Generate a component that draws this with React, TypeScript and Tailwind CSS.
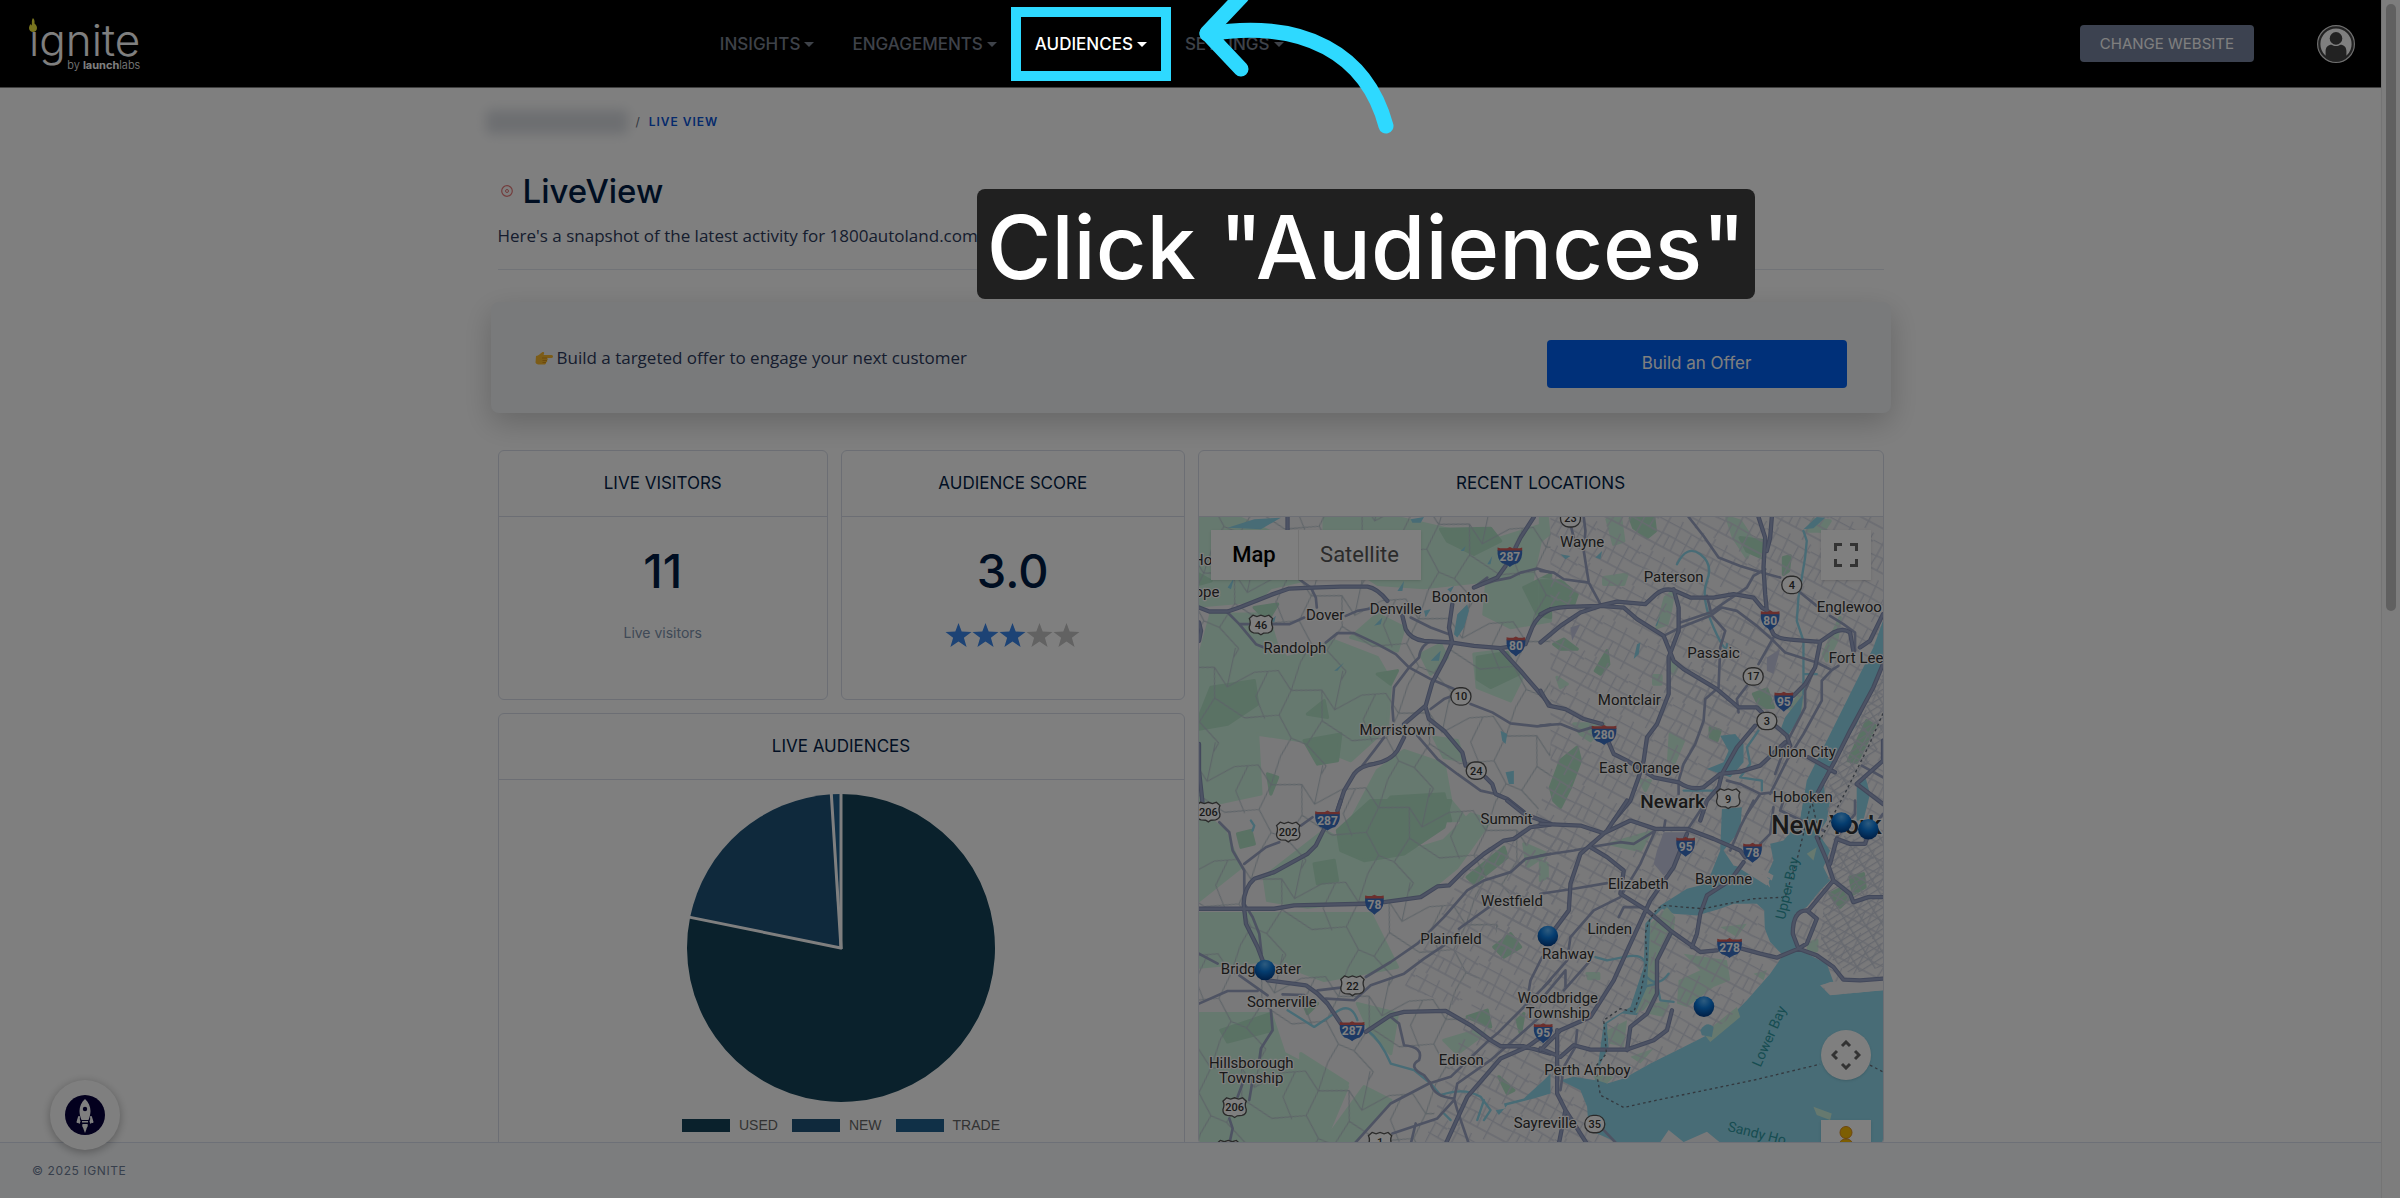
import { ReactNode } from 'react';

const navLinks = ['INSIGHTS', 'ENGAGEMENTS', 'AUDIENCES', 'SETTINGS'];

const Caret = () => (
  <svg viewBox="0 0 10 5" className="h-[5px] w-[10px] shrink-0" fill="currentColor" aria-hidden="true">
    <path d="M0 0h10L5 5z" />
  </svg>
);

const Logo = () => (
  <a href="#" aria-label="ignite by launchlabs" className="relative flex flex-col items-end text-white">
    <svg viewBox="0 0 16 28" className="absolute left-0 top-[2px] h-[14px] w-[8px]" fill="#f0e83c" aria-hidden="true">
      <path d="M8 0C12 4 11 8 11 11c2 1 5 5 5 9 0 5-4 8-8 8s-8-3-8-8c0-3 2-6 3-8 1 1 1 2 2 3C7 11 4 5 8 0z" />
    </svg>
    <span className="text-[44px] font-light leading-[48px]">ıgnite</span>
    <span className="-mt-1.5 text-[11px] font-light leading-[14px]">
      by <b className="font-bold">launch</b>labs
    </span>
  </a>
);

const Arrow = () => (
  <svg viewBox="1190 0 210 140" className="pointer-events-none absolute -top-[7px] left-[154px] z-30 h-[140px] w-[210px]" fill="none" stroke="#2ed9ff" strokeWidth="15" strokeLinecap="round" strokeLinejoin="round" aria-hidden="true">
    <path d="M1387 126C1368 55 1306 18 1208 34" />
    <path d="M1243 -4L1208 33L1242 69" />
  </svg>
);

const Avatar = () => (
  <svg viewBox="0 0 38 38" className="size-[38px]" aria-hidden="true">
    <circle cx="19" cy="19" r="18.4" fill="#444" stroke="#ddd" strokeWidth="1.2" />
    <circle cx="19" cy="19" r="15.6" fill="#fff" />
    <circle cx="19" cy="13.4" r="6.3" fill="#444" />
    <path d="M8.6 32V26c0-4 2.500-6.300 6-6.300 1.300.9 2.700 1.300 4.400 1.300s3.100-.4 4.400-1.300c3.500 0 6 2.300 6 6.300v6c-3 3.400-6.500 4.800-10.400 4.800S11.600 35.400 8.600 32z" fill="#444" />
  </svg>
);

const Header = () => (
  <header className="relative z-20 flex h-[88px] shrink-0 items-center border-b border-[#808080] bg-black pl-[29px] pr-[26px]">
    <div className="flex w-[29.7%] shrink-0">
      <Logo />
    </div>
    <nav>
      <ul className="flex gap-[38px] text-[17px] font-medium">
        {navLinks.map((link) =>
          link === 'AUDIENCES' ? (
            <li key={link} className="relative flex h-[74px] items-center pt-0.5">
              <span className="pointer-events-none absolute -inset-x-6 inset-y-0 z-10 border-10 border-[#2ed9ff] shadow-[0_0_0_9999px_rgba(0,0,0,0.5)]" />
              <button type="button" className="flex items-center gap-1 text-white">
                {link}
                <Caret />
              </button>
              <Arrow />
              <div role="tooltip" className="absolute -left-[58px] top-[182px] z-30 rounded-lg bg-[#202020] px-2.5 pt-1.5 text-[88px] leading-[104px] whitespace-nowrap text-white">
                Click "Audiences"
              </div>
            </li>
          ) : (
            <li key={link} className="flex h-[74px] items-center pt-0.5">
              <button type="button" className="flex items-center gap-1 text-[#7d8492]">
                {link}
                <Caret />
              </button>
            </li>
          )
        )}
      </ul>
    </nav>
    <div className="ml-auto flex items-center gap-[63px]">
      <button type="button" className="rounded bg-[#7885a0] px-5 text-[15px] leading-[37px] text-white">
        CHANGE WEBSITE
      </button>
      <button type="button" aria-label="Account">
        <Avatar />
      </button>
    </div>
  </header>
);

const Card = ({ title, className = '', children }: { title: string; className?: string; children: ReactNode }) => (
  <section className={`overflow-hidden rounded-md border border-[#d8dde8] ${className}`}>
    <h2 className="border-b border-[#d8dde8] text-center text-[17px] leading-[65px] text-[#041f48]">{title}</h2>
    {children}
  </section>
);

const Stars = ({ score }: { score: number }) => (
  <div className="mt-6 flex h-6 justify-center" role="img" aria-label={`${score} of 5`}>
    {[1, 2, 3, 4, 5].map((n) => (
      <svg key={n} viewBox="0 0 27 24" className="h-6 w-[27px]" fill={n <= score ? '#3a86ea' : '#c4c4c4'}>
        <path d="M13.500 0l3.200 8.600 9.800.3-7.600 5.800 2.700 9.300-8.100-5.400L5.400 24l2.700-9.300L.5 8.900l9.800-.3z" />
      </svg>
    ))}
  </div>
);

const audiences = [
  { name: 'USED', color: '#144258', from: 0, to: 281.5 },
  { name: 'NEW', color: '#1e5278', from: 281.5, to: 356.4 },
  { name: 'TRADE', color: '#20608e', from: 356.4, to: 360 },
];

const slicePath = (from: number, to: number) => {
  const point = (deg: number) => {
    const a = ((deg - 90) * Math.PI) / 180;
    return `${155 + 154 * Math.cos(a)} ${155 + 154 * Math.sin(a)}`;
  };
  return `M155 155L${point(from)}A154 154 0 ${to - from > 180 ? 1 : 0} 1 ${point(to)}Z`;
};

const AudiencePie = () => (
  <div className="flex flex-col items-center pt-[13px] pb-16">
    <svg viewBox="0 0 310 310" className="size-[310px]">
      {audiences.map((a) => (
        <path key={a.name} d={slicePath(a.from, a.to)} fill={a.color} />
      ))}
      {audiences.map((a) => (
        <path key={a.name} d="M155 156V0" stroke="#fff" strokeWidth="3" transform={`rotate(${a.from} 155 155)`} />
      ))}
    </svg>
    <ul className="mt-3 flex gap-[14px] font-['Liberation_Sans',sans-serif] text-[14px] leading-5 text-[#666]">
      {audiences.map((a) => (
        <li key={a.name} className="flex items-center gap-[9px]">
          <span className="h-[13px] w-12" style={{ backgroundColor: a.color }} />
          {a.name}
        </li>
      ))}
    </ul>
  </div>
);

/*
 * The map is drawn on a grid of 3 units per pixel. East and South
 * shift a tile to its half of the map.
 */
const EAST = 'translate(1050 0)';
const SOUTH = 'translate(0 1080)';
const SOUTH_EAST = 'translate(1050 1080)';
const tiles = ['', EAST, SOUTH, SOUTH_EAST];

const parks = [
  'M24 228H140L300 300 330 420 240 440 200 480 24 495ZM400 230H620L760 262 900 290 890 420 700 440 560 430 500 390 400 300ZM60 520H230L260 620 330 700 240 760 24 800V650ZM24 720L330 640 430 600 560 650 600 720 590 860 480 960 330 900 200 880 210 1060 24 1100ZM480 590L560 520 640 560 620 630ZM690 640L750 610 770 650 720 700ZM560 990L640 930 760 970 780 1080 830 1140H480ZM900 300L1060 250 1020 440 1080 400V540L960 560 880 520ZM850 640L930 630 1000 700 960 780 860 740ZM730 890L800 900 820 960 760 950Z',
  'M0 228H20L25 280 0 300ZM200 235L240 228 250 300 220 310ZM560 228L600 240 640 300 620 350 580 290ZM0 415L70 425 100 480 0 500ZM820 235L870 240 850 270 800 270ZM190 410L260 400 250 430 190 430ZM350 560L375 470 400 450 390 510 380 550ZM850 640L900 530 890 600 860 660ZM760 790L790 740 780 820 740 800ZM390 660L410 680 400 700 385 690ZM340 705H362V730H340ZM50 710L80 730 60 740ZM390 880L430 900 400 970 385 960ZM100 850L190 850 150 900 120 880ZM300 1020H330L315 1050Z',
  'M24 30L100 90 150 200 24 300ZM24 340H540L620 500 400 540 240 480 24 500ZM220 230L400 90 560 180 760 120 840 40 900 60 800 200 690 290 540 300 350 320 230 300ZM24 640H240L280 760 470 860 400 1026H24ZM330 760L470 850 430 900 330 860ZM500 610L620 640 600 760 540 700ZM520 860L600 900 490 1026H400ZM760 720L860 690 880 700 800 760ZM24 340H200L120 480 24 490ZM1000 130L1070 160 1010 200Z',
  'M330 370L380 320 405 350 400 400 350 480V580L310 630 285 640 320 560ZM430 460L560 480 570 540 520 560 440 620 410 610 415 540 480 510ZM200 690L260 660 250 740 205 730ZM490 700L590 620 600 650 510 725ZM805 430L830 420V450L805 460ZM640 520L680 510 670 540ZM210 130L330 95 300 150ZM0 180L20 190V230L0 240ZM160 820L220 830 200 850 170 840ZM540 380L620 370 590 410ZM340 610L390 600 370 650 320 640ZM270 770L340 745 300 790ZM820 920L875 940 870 960 830 945ZM140 520H175V535H145ZM800 160L830 140 820 180Z',
];

const forests = [
  'M24 830L60 740 190 720 200 790 110 850 24 865ZM860 650L950 635 985 700 900 740 860 715ZM1000 440L1080 400V530L1040 520ZM750 265L900 262 930 300 850 340 770 300ZM340 900L450 880 440 960 380 970ZM540 1140L600 1070 760 1060 780 1140ZM350 820L400 780 410 830ZM190 500L260 490 230 540ZM24 400L60 420 24 430ZM560 700L620 690 600 730ZM230 1000L260 1010 240 1060Z',
  'M0 420L60 420 110 460 100 490 0 510ZM270 232L340 228 345 270 320 290 280 260ZM600 290L675 300 665 350 620 330ZM40 1080L30 1040 60 960 110 920 120 960 90 1040 60 1100ZM165 690L200 630 205 670 180 700ZM40 610L70 595 110 625 60 625ZM510 860L540 870 530 900 510 890ZM925 960L980 840 1005 855 950 965ZM640 760L680 745 700 800 660 800ZM730 350L750 345 745 390 730 400Z',
  'M440 90L540 0H780L760 80 640 160 520 180 450 150ZM90 690L240 640 245 690 110 725ZM910 440L960 400 990 440 940 470ZM830 230L940 140 950 170 850 250ZM830 650L890 630 900 680ZM140 100L180 90 190 130 150 140ZM370 190L430 180 440 240 380 250ZM925 830L970 870 950 880ZM980 660L1000 640 990 700ZM330 590L380 610 350 640Z',
  'M870 280L910 260 930 290 900 320ZM930 230L970 220 975 260 940 280ZM230 690L255 670 250 730Z',
];

const lakes = [
  'M110 260L190 235 270 230 210 265 150 262ZM790 580L800 520 830 490 835 510 820 560 800 590ZM660 235L700 228 690 245 665 245ZM720 660L750 630 745 660ZM430 690L460 665 440 690ZM930 870L950 880 945 910 935 900ZM945 995L970 990 970 1030 955 1030ZM620 450L640 420 635 450ZM550 555L575 530 570 550ZM700 510L720 505 705 530ZM890 370L905 345 900 370ZM810 330L825 315 820 330ZM240 540L255 525 250 545ZM110 440L130 410 120 445ZM770 445L790 435 780 455Z',
  'M790 265L830 228 855 230 820 262ZM60 340L90 345 75 355ZM165 350L185 330 180 355ZM280 655L290 610 300 605 295 640ZM540 885L585 880 610 910V965L570 1010 500 985 550 965 565 930ZM735 830L790 760 780 830 740 890 720 870ZM1029 540L1000 620 960 700 860 900 830 960 800 1020 780 1140H860L850 1010 900 930 950 850 1000 740 1029 670ZM950 1040L975 1005 990 1060 970 1140H950ZM345 555L360 525 350 555Z',
  'M915 930L945 925 940 910 1000 895 1060 840 1080 820V880L1030 895 950 915 925 945Z',
  // Newark Bay, the kills, the harbour and the lower bay
  'M545 25L605 20 600 90 550 150 580 195 640 210 690 262 680 225 700 180 690 130 730 120 780 60 790 0H870L860 60 835 100 870 150 850 200 870 240 840 270 800 320 765 340 755 400 780 450 860 490 880 545 840 555 870 585 1029 570V1032H545L500 995 430 1026 385 990 360 1026H230L145 990 140 920 120 870 60 840 100 830 165 840 175 780 190 670 270 620 310 500 315 370 360 315 440 265 500 250 540 150Z',
];

const statenIsland =
  'M330 360L365 325 400 340 470 345 540 325 580 310 650 310 672 330 674 385 690 425 728 465 690 520 620 600 560 660 500 705 430 740 330 790 250 835 200 850 165 825 185 780 205 740 200 670 245 640 290 645 325 560 332 470Z';

const creeks = [
  '',
  'M410 370Q440 310 480 340T500 420 520 560 560 610M790 270L800 300 795 350 775 470 770 540 790 600V700L830 700M655 870L620 920 630 970 600 1010 665 1020V1050M520 1050H430M790 690V760',
  'M530 690Q570 720 600 790L670 810 720 850 750 885Q820 860 870 890L900 930 880 960M290 630L370 680 430 640Q480 600 500 660M180 60L190 75 185 90M760 940L780 960M860 960L880 900',
  'M165 470L200 480 250 470Q300 460 310 480M310 560L350 550 360 600 400 605M310 520Q350 570 385 520',
];

const highways = [
  // I-80, I-287 and NJ 24
  'M24 500L55 512H110L145 500 240 462 295 443 365 440 450 437H530Q560 442 590 480M635 525L645 565Q660 595 700 600L780 605 850 615 930 622 1005 610 1025 560Q1040 525 1080 505M930 625L990 690 1020 725 1055 765 1080 795M290 228V290M1030 228L990 290 975 320M945 375L920 410 850 440M785 490L775 560 785 605 760 660 725 725 705 795 640 850M640 890L620 930Q600 960 550 970 510 975 490 1000L460 1050 440 1110M705 800L715 835 760 870 815 935 825 975M885 1010L905 1030 915 1060 950 1075 1000 1115M24 910V990L35 1090M24 545L30 570 24 600',
  'M0 520Q30 500 80 498L175 495 230 482 315 490 345 462Q370 440 400 448L450 470H520L580 460 640 470 665 500 690 515M690 560L700 580Q715 595 760 597L840 603 880 575Q910 560 930 575L940 630M0 750L25 795 75 805 130 835 185 850M205 905L220 940 260 960 340 1010 415 1025Q450 1050 490 1040L540 1000 600 993 660 975 735 905M0 605L60 555 120 515 180 495 250 500 290 535 370 585 400 660 430 685 530 745 595 800H650L665 815M655 228L675 290 670 380 675 460 680 510M695 228L690 290 680 330M400 445L415 500V570L385 650V760L350 850 320 890 310 960 295 1010 270 1080 220 1140M760 765L795 730 825 680 840 605M645 855L590 920 545 1000 535 1040 500 1080 480 1140M700 850L740 885 750 915M1029 520L990 600 960 620M1029 670L1000 740 930 870 885 960 820 1080M805 950L885 995M1029 900V960L950 1030 1029 1090',
  'M24 325H250L310 315 525 310M580 305L690 290 740 258 775 255 820 210 880 160 940 120 970 115 1020 80 1080 72M450 0L440 30M400 85L375 135 350 160 250 215 190 235Q160 260 158 310L165 370 200 440 215 480M230 540L345 555 380 580 410 610 450 670M525 695L600 645 640 635 765 632 840 675 900 720 930 738H1000L1080 760M765 1032L830 890 930 775 1010 740 1080 690M950 0L1000 40 1080 70',
  'M0 70L120 75 190 98 270 60 345 85H440L520 115 600 150 615 170M260 0L200 90 120 160 90 250 85 330 40 390M440 100L400 200 330 300 270 430 220 540 150 650 60 690 0 750M150 140L200 170 250 210 240 280 320 330 390 390 460 440 480 455 530 450M605 445L660 460 710 472 775 445 830 465 880 500 910 538 960 540 1029 535M610 185L570 240 500 285 480 340 470 400 455 440M390 400L350 480V580L320 640 270 680 260 750M395 630L380 690 340 720 260 748H150L100 735 60 770 0 745M50 690V880L75 930 140 1032M75 930L55 1032M775 445L758 400Q758 330 800 330L830 355 800 430ZM805 330L880 240 860 180 830 110M880 240L930 280 940 305 985 290H1029M870 190L890 115 930 130H975L985 100',
];

const routes = [
  'M110 515L145 550H180M245 550H295L340 530M465 525L500 510 540 503M660 530L720 560 775 580M145 550L195 610 225 622M325 415L360 440 375 470 378 500M405 605L440 577H490L560 610 615 640 655 680 720 715 790 745M840 790L905 815 960 848 1040 857 1080 852M725 600Q690 610 685 650L655 680 610 740 605 800 608 840M580 890L550 930 515 975M680 885L740 955 800 1000 870 1050 915 1060M1080 395L1040 383 990 395 960 410 910 420 850 440 890 410M720 805L760 775 800 760',
  'M130 228L135 270 130 330 145 425 180 490M0 390L40 395 70 415 145 425M445 228L490 285 535 350 600 375 665 395 720 410M780 455L830 495M870 525L910 550 945 575V630M420 545L510 515 560 480 620 440 640 405 675 385M370 585L420 560 510 525 545 500 590 510 650 555 700 600 735 635 830 665 875 688 895 675M500 465L515 525 555 570 540 620 535 740 495 775 490 840 465 910 430 970 415 1020V1060M700 590L655 670M620 735L590 775 595 815M825 680L795 750V800L740 905 705 1000M875 688L845 720V780L790 880 740 960 690 1060M0 855L60 850 115 872 155 860M560 1020L600 1030 660 1060 700 1055M660 1060L620 1120M965 975L1029 1010M90 250L100 290',
  'M24 610L110 572H200M380 570L450 562M525 530L600 485 680 430 760 350 830 270 880 240 960 215 1005 175 1080 160M405 595L490 600 540 555 640 520 700 475 760 435M805 385L895 320M24 460L80 490M145 525L230 585M240 630L245 690 210 745 205 780M155 850L140 890M185 840L175 900M115 955L125 985 115 1032M85 65L115 95 125 150 160 210V310L185 350 205 400 212 460M365 50L330 75M265 125L225 140 160 190M600 650L625 670 640 735Q700 740 685 780 650 800 700 825L720 850Q730 890 790 895L800 930 835 1032M490 1032L600 910 715 850 780 830 895 720 920 700 1010 610M605 1000L740 955 790 900 800 850 900 780 1060 640M675 970L660 1032M1055 470L1020 540 1015 570M1080 540L950 670M275 582L340 584',
  'M0 165L100 150 150 140 240 125 280 130 345 90M345 90L300 190 240 290 160 330 90 410 80 480 10 560M0 280L100 265 200 248M640 0L600 80 570 150M375 60L370 90M500 0L440 90M700 20L690 100 660 130M0 600L75 510V560M150 480L70 570M110 690L105 740 70 800 60 870M190 990L230 1032M235 350L250 320 300 320M730 0L720 30 850 90M945 0V40L890 110M1029 40L985 100',
];

const Interstate = ({ x, y, n }: { x: number; y: number; n: number }) => {
  const w = n > 99 ? 37 : 28;
  return (
    <g transform={`translate(${x} ${y})`}>
      <path d={`M${-w} -20H${w}Q${w + 2} 8 ${w - 14} 20Q6 25 0 31Q-6 25 ${14 - w} 20Q${-w - 2} 8 ${-w} -20Z`} fill="#3b73c8" />
      <path d={`M${-w} -18V-27L${-w + 8} -25 -8 -25 0 -29 8 -25 ${w - 8} -25 ${w} -27V-18Z`} fill="#d95f5a" />
      <text y="13" textAnchor="middle" fontSize="36" fontWeight="700" fill="#fff">{n}</text>
    </g>
  );
};

const UsRoute = ({ x, y, n }: { x: number; y: number; n?: number }) => (
  <g transform={`translate(${x} ${y})`}>
    <path d="M-24 -29L-12 -25 0 -29 12 -25 24 -29 35 -19Q29 -8 35 6 36 20 22 24L8 25 0 30 -8 25 -22 24Q-36 20 -35 6 -29 -8 -35 -19Z" fill="#fff" stroke="#555" strokeWidth="4" />
    <text y="12" textAnchor="middle" fontSize="33" fontWeight="500" fill="#333">{n}</text>
  </g>
);

const StateRoute = ({ x, y, n }: { x: number; y: number; n: number }) => (
  <g transform={`translate(${x} ${y})`}>
    <rect x="-30" y="-26" width="60" height="52" rx="25" fill="#fff" stroke="#555" strokeWidth="4" />
    <text y="12" textAnchor="middle" fontSize="33" fontWeight="500" fill="#333">{n}</text>
  </g>
);

const towns: [string, number, number][] = [
  ['Ho', 35, 372], ['ope', 48, 467], ['Boonton', 808, 484], ['Denville', 615, 520], ['Dover', 403, 537],
  ['Randolph', 312, 636], ['Morristown', 620, 882], ['Summit', 948, 1151], ['Wayne', 1175, 318],
  ['Paterson', 1450, 424], ['Englewoo', 1978, 514], ['Passaic', 1570, 652], ['Fort Lee', 1998, 667],
  ['Montclair', 1317, 794], ['East Orange', 1347, 997], ['Union City', 1836, 948], ['Hoboken', 1838, 1083],
  ['Westfield', 964, 1396], ['Plainfield', 781, 1511], ['Bridgewater', 210, 1600], ['Somerville', 273, 1699],
  ['Hillsborough', 181, 1883], ['Township', 181, 1928], ['Edison', 812, 1874], ['Elizabeth', 1344, 1347],
  ['Bayonne', 1600, 1330], ['Linden', 1258, 1480], ['Rahway', 1133, 1555], ['Woodbridge', 1102, 1687],
  ['Township', 1102, 1732], ['Perth Amboy', 1191, 1905], ['Sayreville', 1064, 2063],
];

const pins: [number, number][] = [[222, 1589], [1072, 1487], [1541, 1699], [1954, 1146], [2035, 1166]];

const LocationMap = () => (
  <svg viewBox="24 228 2055 1884" className="block w-full bg-[#f3f2f4] font-[Roboto,sans-serif]" role="img" aria-label="Map of recent visitor locations">
    <defs>
      <pattern id="lanes" width="330" height="290" patternUnits="userSpaceOnUse" patternTransform="rotate(12)">
        <path d="M0 60L70 40 120 90 210 70 260 120 330 60M120 90L100 170 150 230 130 290M130 0L120 90M0 200L100 170M210 70L230 160 330 200M230 160L200 240 150 230M260 0V120M200 240L270 290M270 0L260 30M40 50L20 130 60 190" fill="none" stroke="#b9c6cf" strokeWidth="3" />
      </pattern>
      <pattern id="streets" width="150" height="120" patternUnits="userSpaceOnUse" patternTransform="rotate(28)">
        <path d="M0 20H80L150 24M0 60L50 56 150 60M0 96H150M30 0V60L24 120M70 0L76 96M110 24V120M140 0L136 60M52 56V96" fill="none" stroke="#d2d6e2" strokeWidth="4" />
      </pattern>
      <pattern id="blocks" width="44" height="36" patternUnits="userSpaceOnUse" patternTransform="rotate(-32)">
        <path d="M0 8H44M0 26H44M14 0V36" fill="none" stroke="#cdd2de" strokeWidth="4" />
      </pattern>
      <radialGradient id="pin" cx="50%" cy="22%" r="80%">
        <stop offset="0%" stopColor="#5cb8ff" />
        <stop offset="45%" stopColor="#0a7be0" />
        <stop offset="100%" stopColor="#003a86" />
      </radialGradient>
    </defs>

    {tiles.map((t, i) => (
      <g key={i} transform={t}>
        <path d={parks[i]} fill="#cdf2de" strokeLinejoin="round" stroke="#cdf2de" strokeWidth="10" />
        <path d={forests[i]} fill="#b4e4c9" strokeLinejoin="round" stroke="#b4e4c9" strokeWidth="10" />
      </g>
    ))}
    <path d="M24 228H1080V1000L700 2112H24Z" fill="url(#lanes)" />
    <path d="M1080 228H2079V1650L1300 2112H700L1080 1000Z" fill="url(#streets)" />
    <path d="M840 1250L1060 1130 1150 1200 1080 1500 900 1560 800 1700 640 1640ZM1400 740L1600 620 1720 760 1560 860ZM1600 600L1700 500 1760 620Z" fill="url(#streets)" />

    <g transform={SOUTH_EAST}>
      <path d={lakes[3]} fill="#90d8ec" />
      <path d={statenIsland} fill="#f3f2f4" />
      <path d={parks[3]} fill="#cdf2de" />
      <path d={statenIsland} fill="url(#streets)" />
      <path d="M845 555L870 545 1029 535V570L870 584Z" fill="#f3f2f4" />
      <path d="M600 205L680 255 690 235 620 195ZM640 190L700 225 695 240 630 200Z" fill="#f3f2f4" />
      <path d="M370 95H440L400 200 370 225 340 190 350 150Z" fill="#c9cde4" />
      <path d="M480 690Q500 660 520 680L515 710 485 705Z" fill="#90d8ec" />
      <path d="M880 110L1029 90V500L930 520 840 450 850 320Z" fill="url(#blocks)" />
    </g>
    {tiles.slice(0, 3).map((t, i) => (
      <path key={i} transform={t} d={lakes[i]} fill="#90d8ec" />
    ))}
    <g transform={EAST}>
      <path d="M680 650L720 625 700 700 680 690ZM90 560L120 550 95 600Z" fill="#c9cde4" />
      <path d="M1029 700V900L950 1020 860 1130 870 1010Z" fill="url(#blocks)" />
    </g>
    {tiles.map((t, i) => (
      <g key={i} transform={t} fill="none" strokeLinejoin="round" strokeLinecap="round">
        <path d={creeks[i]} stroke="#90d8ec" strokeWidth="7" />
        <path d={routes[i]} stroke="#9da7c6" strokeWidth="8" />
        <path d={highways[i]} stroke="#8490b5" strokeWidth="13" />
        <path d={highways[i]} stroke="#9ba6c9" strokeWidth="7" />
      </g>
    ))}
    <path d="M2079 818L2035 918 1970 1048 1890 1198 1865 1080 1820 1260 1785 1370 1690 1375 1610 1390 1540 1405 1420 1395Q1380 1410 1365 1480L1370 1560 1350 1660 1330 1715 1290 1705 1240 1740 1248 1840 1215 1880 1230 1965 1300 2002 1400 1980 1690 1920 1890 1872M2040 1875L2079 1895" fill="none" stroke="#66707c" strokeWidth="4" strokeDasharray="8 9" />

    <Interstate x={958} y={347} n={287} />
    <Interstate x={976} y={616} n={80} />
    <Interstate x={410} y={1139} n={287} />
    <Interstate x={1740} y={538} n={80} />
    <Interstate x={1781} y={782} n={95} />
    <Interstate x={1241} y={882} n={280} />
    <Interstate x={551} y={1392} n={78} />
    <Interstate x={484} y={1772} n={287} />
    <Interstate x={1058} y={1778} n={95} />
    <Interstate x={1486} y={1218} n={95} />
    <Interstate x={1687} y={1236} n={78} />
    <Interstate x={1618} y={1522} n={278} />
    <UsRoute x={210} y={552} n={46} />
    <UsRoute x={52} y={1114} n={206} />
    <UsRoute x={292} y={1174} n={202} />
    <UsRoute x={485} y={1636} n={22} />
    <UsRoute x={131} y={2002} n={206} />
    <UsRoute x={568} y={2106} n={1} />
    <UsRoute x={112} y={2130} />
    <UsRoute x={1614} y={1074} n={9} />
    <StateRoute x={811} y={767} n={10} />
    <StateRoute x={857} y={990} n={24} />
    <StateRoute x={1140} y={232} n={23} />
    <StateRoute x={1805} y={432} n={4} />
    <StateRoute x={1689} y={707} n={17} />
    <StateRoute x={1730} y={841} n={3} />
    <StateRoute x={1213} y={2052} n={35} />

    <g fontSize="45" fill="#333" stroke="#fff" strokeWidth="7" strokeLinejoin="round" paintOrder="stroke" textAnchor="middle">
      {towns.map(([name, x, y]) => (
        <text key={`${name}${x}`} x={x} y={y}>{name}</text>
      ))}
      <text x="1447" y="1103" fontSize="57" fontWeight="500">Newark</text>
      <text x="1743" y="1179" fontSize="78" fontWeight="500" textAnchor="start">New York</text>
    </g>
    <g fontSize="42" fill="#2f9aa3" textAnchor="middle">
      <text transform="translate(1805 1347) rotate(-77)">Upper Bay</text>
      <text transform="translate(1750 1794) rotate(-66)">Lower Bay</text>
      <text transform="translate(1610 2072) rotate(14)" textAnchor="start">Sandy Ho</text>
    </g>
    {pins.map(([x, y]) => (
      <circle key={x} cx={x} cy={y} r="31" fill="url(#pin)" />
    ))}
  </svg>
);

const MapControls = () => (
  <div className="font-[Roboto,sans-serif] text-[#565656]">
    <div className="absolute left-3 top-[13px] flex bg-white text-[22px] leading-[50px] shadow">
      <button type="button" className="w-[87px] font-medium text-black">Map</button>
      <button type="button" className="w-[123px] border-l border-[#e6e6e6]">Satellite</button>
    </div>
    <button type="button" aria-label="Toggle fullscreen view" className="absolute right-3 top-[13px] grid size-[50px] place-items-center bg-white shadow">
      <svg viewBox="0 0 24 24" className="size-6" fill="none" stroke="#666" strokeWidth="3">
        <path d="M1.500 8V1.500H8M16 1.500h6.500V8M22.500 16v6.500H16M8 22.500H1.500V16" />
      </svg>
    </button>
    <button type="button" aria-label="Map camera controls" className="absolute right-3 top-[513px] grid size-[50px] place-items-center rounded-full bg-white shadow">
      <svg viewBox="0 0 30 30" className="size-[30px]" fill="none" stroke="#666" strokeWidth="3">
        <path d="M11 6l4-4 4 4M11 24l4 4 4-4M6 11l-4 4 4 4M24 11l4 4-4 4" />
      </svg>
    </button>
    <button type="button" aria-label="Drag Pegman onto the map to open Street View" className="absolute right-3 top-[603px] flex size-[50px] justify-center bg-white pt-[6px] shadow">
      <svg viewBox="0 0 16 32" className="h-8 w-4" fill="#fbbc04" stroke="#d98c1f" strokeWidth="1">
        <path d="M1 22c0-6 2-9 7-9s7 3 7 9l-3 2v7H4v-7z" />
        <circle cx="8" cy="6.500" r="6" />
      </svg>
    </button>
  </div>
);

const Banner = () => (
  <div className="-mx-[7px] mt-8 flex h-[111px] items-start justify-between rounded-lg bg-[#f2f4f7] px-11 pt-[38px] shadow-[0_10px_30px_rgba(0,0,0,0.2)]">
    <p className="flex items-center gap-1 font-['Open_Sans',sans-serif] text-[17px] leading-9 text-[#2c3a5c]">
      <svg viewBox="0 0 36 26" className="h-[13px] w-[18px]" aria-hidden="true">
        <path d="M2 8C8 7 10 3 15 0c4-1 4 3 2 6h16c4 0 4 6 0 6h-9c2 1 2 4 0 5 1 2 0 4-2 4 0 3-1 4-4 4H9c-4 0-7-1-8-4z" fill="#f9b82e" />
        <path d="M14 12h10M15 17h9M15 21h7" stroke="#cf8a12" strokeWidth="1.500" />
      </svg>
      Build a targeted offer to engage your next customer
    </p>
    <button type="button" className="h-12 w-[300px] rounded bg-[#0061f2] text-[17px] text-white">
      Build an Offer
    </button>
  </div>
);

const ChatLauncher = () => (
  <button type="button" aria-label="Open launcher" className="absolute bottom-12 left-[50px] z-10 grid size-[70px] place-items-center rounded-full bg-white shadow-[0_2px_10px_rgba(0,0,0,0.3)]">
    <svg viewBox="0 0 40 40" className="size-10">
      <circle cx="20" cy="20" r="20" fill="#06003c" />
      <path d="M20 4c3.500 3 5.500 7.500 5.500 12 0 3-.8 6-2 9h-7c-1.200-3-2-6-2-9 0-4.500 2-9 5.500-12zM14 21.500c-1 2-2.500 6 .5 7.500l1-2.500zM26 21.500c1 2 2.500 6-.5 7.500l-1-2.500zM17 26h6v1.500h-6zM17.500 29h5c1 3-1 3.500-1 5l-1.500 4-1.500-4c0-1.500-2-2-1-5z" fill="#fff" />
      <path d="M14 22l-1.500 5M26 22l1.500 5" stroke="#fff" strokeWidth="2" strokeLinecap="round" />
      <circle cx="20" cy="14" r="2.200" fill="#06003c" />
    </svg>
  </button>
);

export default function App() {
  return (
    <div className="relative flex h-screen overflow-hidden bg-white font-[Inter,sans-serif]">
      <div className="flex min-w-0 flex-1 flex-col">
        <Header />
        <main className="min-h-0 flex-1 overflow-hidden px-4">
          <div className="mx-auto max-w-[1386px]">
            <nav aria-label="Breadcrumb" className="flex items-center gap-2 pt-[25px] text-xs font-semibold leading-[18px] tracking-[0.08em]">
              <span className="-my-1 -ml-3 h-6 w-[142px] rounded bg-[#dadde2] blur-[6px]" />
              <span className="font-normal text-[#5d6675]">/</span>
              <a href="#" className="text-[#0a55d8]">LIVE VIEW</a>
            </nav>
            <h1 className="mt-10 flex items-center gap-2.5 pl-[3px] text-[33px] font-medium leading-10 text-[#001c44]">
              <svg viewBox="0 0 12 12" className="size-3" fill="none" stroke="#e67a7a" aria-hidden="true">
                <circle cx="6" cy="6" r="5.300" strokeWidth="1.200" />
                <circle cx="6" cy="6" r="1.500" />
              </svg>
              LiveView
            </h1>
            <p className="mt-[13px] border-b border-[#e3e6ee] pb-[21px] font-['Open_Sans',sans-serif] text-[17px] leading-6 text-[#2c3a5c]">
              Here's a snapshot of the latest activity for 1800autoland.com
            </p>
            <Banner />
            <div className="mt-[37px] grid grid-cols-[331fr_344fr_687fr] items-start gap-[13px]">
              <Card title="LIVE VISITORS">
                <div className="pt-[26px] pb-[54px] text-center">
                  <p className="text-[47px] font-medium leading-14 text-[#001c44]">11</p>
                  <p className="mt-[22px] text-[14px] leading-6 text-[#8093ad]">Live visitors</p>
                </div>
              </Card>
              <Card title="AUDIENCE SCORE">
                <div className="pt-[26px] pb-[52px] text-center">
                  <p className="text-[47px] font-medium leading-14 text-[#001c44]">3.0</p>
                  <Stars score={3} />
                </div>
              </Card>
              <Card title="RECENT LOCATIONS" className="row-span-2">
                <div className="relative">
                  <LocationMap />
                  <MapControls />
                </div>
              </Card>
              <Card title="LIVE AUDIENCES" className="col-span-2">
                <AudiencePie />
              </Card>
            </div>
          </div>
        </main>
        <footer className="h-14 shrink-0 border-t border-[#dbe1ee] bg-[#f9fbfd] pl-8 text-xs leading-14 tracking-wider text-[#6f7f98]">
          © 2025 IGNITE
        </footer>
      </div>
      <div className="w-[19px] border-l border-[#e8e8e8] bg-[#fafafa] py-1 pl-1" aria-hidden="true">
        <div className="h-[51%] w-2.5 rounded-full bg-[#c1c1c1]" />
      </div>
      <ChatLauncher />
    </div>
  );
}
